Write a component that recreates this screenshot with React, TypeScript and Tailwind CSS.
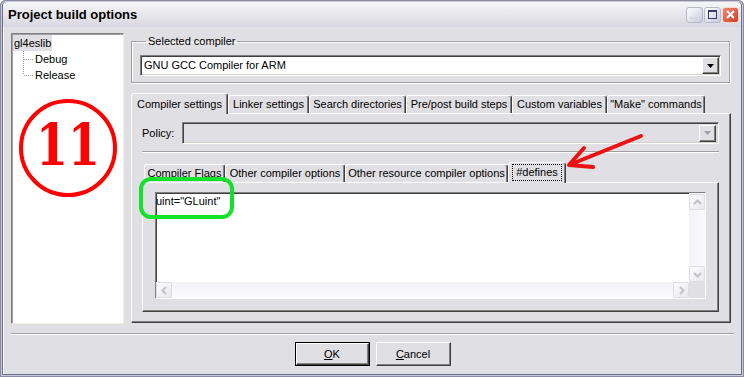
import React from 'react';

const raised =
  'border border-t-white border-l-white border-r-[#404040] border-b-[#404040] shadow-[inset_-1px_-1px_0_#808080]';
const sunken =
  'border border-t-[#808080] border-l-[#808080] border-r-white border-b-white shadow-[inset_1px_1px_0_#404040,inset_-1px_-1px_0_#d4d0c8]';

const Tab: React.FC<{ label: string; w: string; active?: boolean; focus?: boolean }> = ({ label, w, active, focus }) => (
  <div
    className={`${w} flex justify-center whitespace-nowrap rounded-t-[3px] border-t border-l border-r border-t-white border-l-white border-r-[#404040] shadow-[inset_-1px_0_0_#808080] ${
      active ? 'relative z-10 -mb-px h-[21px] items-start bg-[#e0dfe3] pt-[2px]' : 'h-[18px] items-center'
    }`}
  >
    <span className={focus ? 'px-[3px] leading-[15px] outline-1 outline-dotted outline-black' : ''}>{label}</span>
  </div>
);

const Chevron: React.FC<{ dir: 'up' | 'down' | 'left' | 'right' }> = ({ dir }) => {
  const pts = {
    up: '1,6 4.5,2.5 8,6',
    down: '1,3 4.5,6.5 8,3',
    left: '6,1 2.5,4.5 6,8',
    right: '3,1 6.5,4.5 3,8',
  }[dir];
  return (
    <svg width="9" height="9" viewBox="0 0 9 9">
      <polyline points={pts} fill="none" stroke="#c2c2cc" strokeWidth="2" />
    </svg>
  );
};

const ScrollBtn: React.FC<{ dir: 'up' | 'down' | 'left' | 'right' }> = ({ dir }) => (
  <div className="flex h-[16px] w-[16px] items-center justify-center rounded-[2px] border border-[#dcdce4] bg-linear-to-br from-[#fdfdfe] to-[#e8e8ee]">
    <Chevron dir={dir} />
  </div>
);

const DropArrow: React.FC<{ disabled?: boolean }> = ({ disabled }) => (
  <div className={`flex h-[17px] w-[17px] items-center justify-center bg-[#e0dfe3] ${raised}`}>
    <svg width="7" height="4" viewBox="0 0 7 4">
      <polygon points="0,0 7,0 3.5,4" fill={disabled ? '#a0a0a0' : '#000'} />
    </svg>
  </div>
);

const TitleButton: React.FC<{ kind: 'min' | 'max' | 'close' }> = ({ kind }) => {
  if (kind === 'close') {
    return (
      <div className="flex h-[16px] w-[17px] items-center justify-center rounded-[3px] border border-[#f4d8d0] bg-linear-to-br from-[#f08a72] to-[#c83a24]">
        <svg width="9" height="9" viewBox="0 0 9 9">
          <path d="M1 1 L8 8 M8 1 L1 8" stroke="#fff" strokeWidth="2" />
        </svg>
      </div>
    );
  }
  return (
    <div className="flex h-[16px] w-[17px] items-center justify-center rounded-[3px] border border-[#b8b8cc] bg-linear-to-br from-[#ffffff] to-[#c9c9da]">
      {kind === 'min' ? (
        <div className="mt-[7px] mr-[3px] h-[2px] w-[6px] bg-[#d6d6e0]" />
      ) : (
        <div className="h-[9px] w-[9px] border border-t-2 border-[#3a3a6a]" />
      )}
    </div>
  );
};

const TreeLine: React.FC<{ last?: boolean }> = ({ last }) => (
  <svg width="21" height="16" viewBox="0 0 21 16">
    <line x1="10.5" y1="0" x2="10.5" y2={last ? 8 : 16} stroke="#9a9a9a" strokeDasharray="1 1" />
    <line x1="11" y1="8.5" x2="20" y2="8.5" stroke="#9a9a9a" strokeDasharray="1 1" />
  </svg>
);

export default function App() {
  return (
    <div className="relative flex h-[377px] w-[744px] flex-col rounded-t-[6px] bg-[#e0dfe3] px-[3px] pt-[2px] pb-[3px] font-['Liberation_Sans',Arial,sans-serif] text-[11px] text-black shadow-[inset_0_0_0_1px_#8a8aa4,inset_0_0_0_2px_#c8c8d6,inset_0_0_0_3px_#6e6e8e]">
      {/* TITLE BAR */}
      <div className="flex h-[25px] items-center rounded-t-[4px] bg-linear-to-b from-[#f6f6f8] to-[#d8d7e0] pl-[5px]">
        <span className="text-[13px] font-bold">Project build options</span>
        <div className="ml-auto mr-[2px] flex items-center gap-[1px]">
          <TitleButton kind="min" />
          <TitleButton kind="max" />
          <TitleButton kind="close" />
        </div>
      </div>

      <div className="flex flex-1 flex-col border-l border-l-white px-[7px]">
        <div className="flex gap-[7px] pt-[6px]">
          {/* TREE */}
          <div className="h-[291px] w-[113px] border border-t-[#808080] border-l-[#808080] border-r-[#f1efe2] border-b-[#f1efe2] bg-white shadow-[inset_1px_1px_0_#a0a0a0]">
            <div className="pl-[1px] pt-[1px]">
              <div className="flex h-[16px] items-center">
                <span className="bg-[#e0dfe3] px-[1px] leading-[16px]">gl4eslib</span>
              </div>
              <div className="flex h-[16px] items-center">
                <TreeLine />
                <span className="pl-[1px]">Debug</span>
              </div>
              <div className="flex h-[16px] items-center">
                <TreeLine last />
                <span className="pl-[1px]">Release</span>
              </div>
            </div>
            <svg width="104" height="104" viewBox="0 0 104 104" className="ml-[4px] mt-[13px]">
              <circle cx="52" cy="52" r="47" fill="none" stroke="#ff0000" strokeWidth="4" />
              <text
                x="20"
                y="69"
                fill="#ff0000"
                fontFamily="'DejaVu Serif', serif"
                fontWeight="bold"
                fontSize="58"
                textLength="64"
                lengthAdjust="spacingAndGlyphs"
              >
                11
              </text>
            </svg>
          </div>

          {/* RIGHT SIDE */}
          <div className="flex w-[600px] flex-col">
            <fieldset className="mt-[1px] w-[599px] border border-[#a0a0a4] px-[8px] pb-[6px] shadow-[inset_1px_1px_0_#fff,1px_1px_0_#fff]">
              <legend className="ml-[6px] px-[2px] leading-[14px]">Selected compiler</legend>
              <div className={`mt-[7px] flex h-[21px] items-center bg-white pl-[3px] pr-[1px] ${sunken}`}>
                <span className="flex-1">GNU GCC Compiler for ARM</span>
                <DropArrow />
              </div>
            </fieldset>

            <div className="mt-[10px] flex h-[20px] items-end">
              <Tab label="Compiler settings" w="w-[97px]" active />
              <Tab label="Linker settings" w="w-[81px]" />
              <Tab label="Search directories" w="w-[97px]" />
              <Tab label="Pre/post build steps" w="w-[106px]" />
              <Tab label="Custom variables" w="w-[95px]" />
              <Tab label={'"Make" commands'} w="w-[98px]" />
            </div>
            <div className="h-[210px] w-[600px] border border-t-white border-l-white border-r-[#404040] border-b-[#404040] pl-[10px] pt-[8px] shadow-[inset_-1px_-1px_0_#808080]">
              <div className="flex h-[22px] items-center">
                <span className="w-[40px]">Policy:</span>
                <div className={`flex h-[22px] w-[537px] items-center justify-end pr-[2px] ${sunken}`}>
                  <DropArrow disabled />
                </div>
              </div>
              <div className="mt-[7px] w-[577px] border-t border-b border-t-[#a0a0a4] border-b-white" />

              <div className="mt-[9px] flex h-[20px] items-end pl-[2px]">
                <Tab label="Compiler Flags" w="w-[81px]" />
                <Tab label="Other compiler options" w="w-[120px]" />
                <Tab label="Other resource compiler options" w="w-[163px]" />
                <Tab label="#defines" w="w-[58px]" active focus />
              </div>
              <div className="h-[130px] w-[577px] border border-t-white border-l-white border-r-[#404040] border-b-[#404040] pl-[12px] pt-[9px] shadow-[inset_-1px_-1px_0_#808080]">
                <div className={`grid h-[107px] w-[551px] grid-cols-[1fr_16px] grid-rows-[1fr_16px] bg-white ${sunken}`}>
                  <div className="pt-[2px] leading-[13px]">uint="GLuint"</div>
                  <div className="flex flex-col justify-between bg-linear-to-r from-[#f3f3f8] to-[#fbfbfd] pt-[1px]">
                    <ScrollBtn dir="up" />
                    <ScrollBtn dir="down" />
                  </div>
                  <div className="flex justify-between bg-linear-to-b from-[#f3f3f8] to-[#fbfbfd]">
                    <ScrollBtn dir="left" />
                    <ScrollBtn dir="right" />
                  </div>
                  <div className="bg-[#e0dfe3]" />
                </div>
              </div>
            </div>
          </div>
        </div>

        {/* FOOTER */}
        <div className="mt-[9px] border-t border-b border-t-[#a0a0a4] border-b-white" />
        <div className="mt-[7px] flex justify-center gap-[6px]">
          <div className="border border-black">
            <div className={`flex h-[22px] w-[73px] items-center justify-center bg-[#e0dfe3] ${raised}`}>
              <span>
                <span className="underline">O</span>K
              </span>
            </div>
          </div>
          <div className={`flex h-[24px] w-[75px] items-center justify-center bg-[#e0dfe3] ${raised}`}>
            <span>
              <span className="underline">C</span>ancel
            </span>
          </div>
        </div>
      </div>

      {/* ANNOTATIONS */}
      <div className="absolute left-[139px] top-[177px] h-[42px] w-[95px] rounded-[12px] border-4 border-[#12e22c]" />
      <svg className="absolute left-0 top-0" width="744" height="377" viewBox="0 0 744 377" pointerEvents="none">
        <path
          d="M641 136 L569 165 M569 165 L584 148 M569 165 L593 167"
          fill="none"
          stroke="#ee1111"
          strokeWidth="4"
          strokeLinecap="round"
          strokeLinejoin="round"
        />
      </svg>
    </div>
  );
}
